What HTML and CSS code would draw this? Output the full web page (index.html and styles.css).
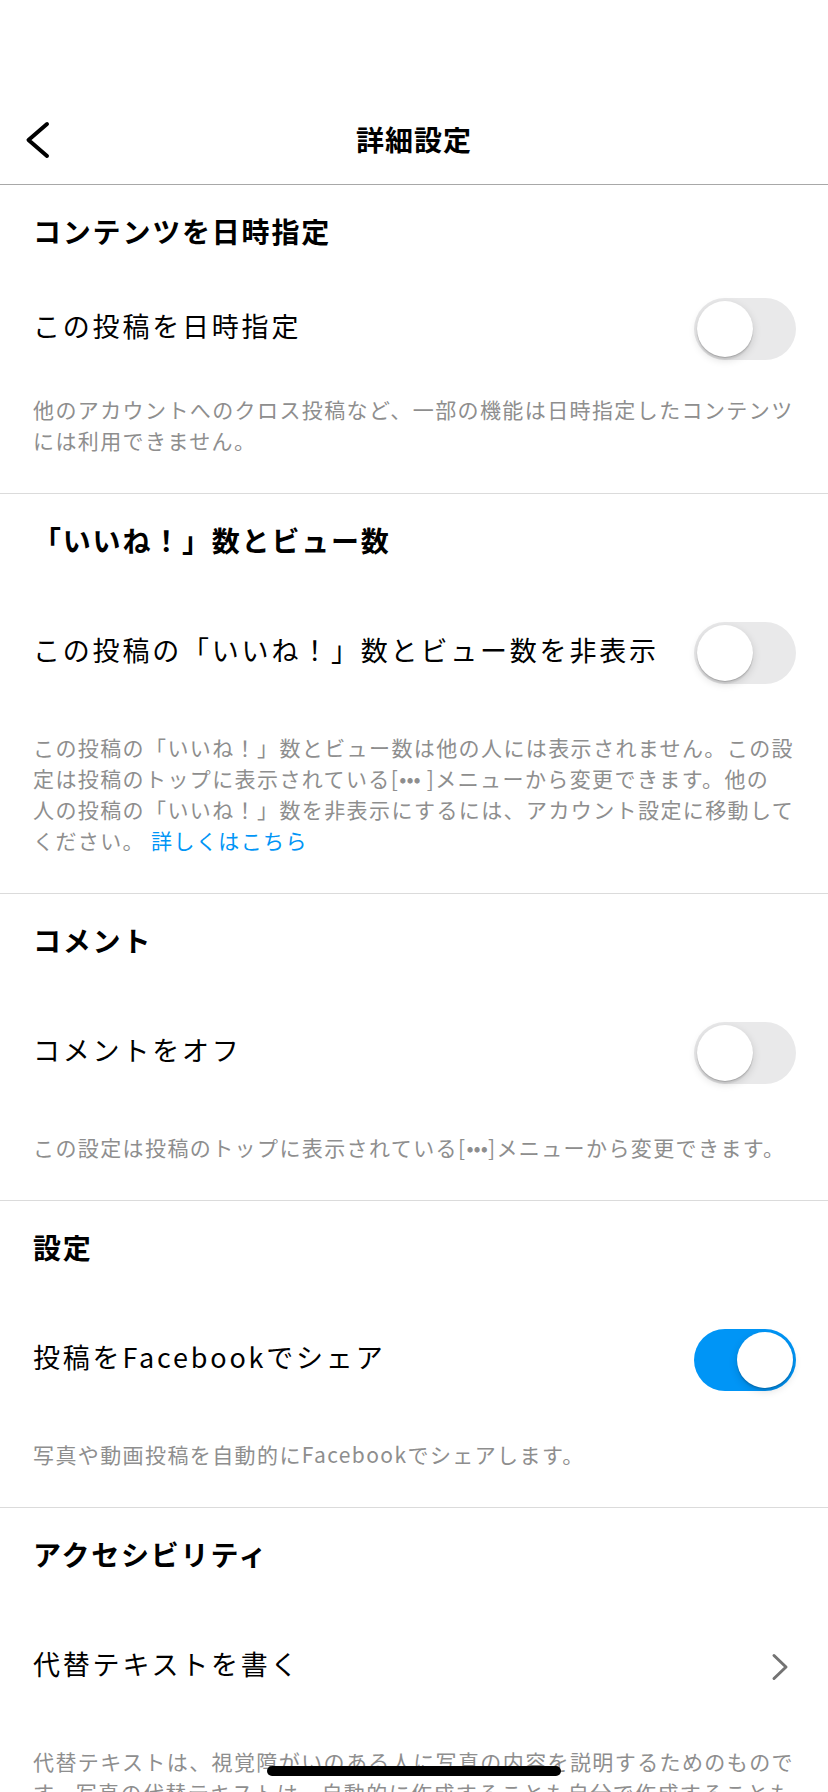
FILE: index.html
```html
<!DOCTYPE html>
<html lang="ja">
<head>
<meta charset="utf-8">
<title>詳細設定</title>
<link rel="stylesheet" href="styles.css">
</head>
<body>
<div class="screen">
  <header class="nav">
    <div class="nav-left">
      <svg class="back" width="26" height="40" viewBox="0 0 26 40"><path d="M22 4 L3.5 20 L22 36" fill="none" stroke="#000" stroke-width="4" stroke-linecap="round" stroke-linejoin="round"/></svg>
    </div>
    <h1 class="nav-title">詳細設定</h1>
    <div class="nav-right"></div>
  </header>

  <section class="section section-first">
    <h2 class="section-title">コンテンツを日時指定</h2>
    <div class="row">
      <span class="row-label">この投稿を日時指定</span>
      <span class="toggle"><span class="knob"></span></span>
    </div>
    <p class="desc">他のアカウントへのクロス投稿など、一部の機能は日時指定したコンテンツ<br>には利用できません。</p>
  </section>

  <section class="section">
    <h2 class="section-title">「いいね！」数とビュー数</h2>
    <div class="row">
      <span class="row-label">この投稿の「いいね！」数とビュー数を非表示</span>
      <span class="toggle"><span class="knob"></span></span>
    </div>
    <p class="desc">この投稿の「いいね！」数とビュー数は他の人には表示されません。この設<br>定は投稿のトップに表示されている[<span class="dots">•••</span> ]メニューから変更できます。他の<br>人の投稿の「いいね！」数を非表示にするには、アカウント設定に移動して<br>ください。 <a class="link">詳しくはこちら</a></p>
  </section>

  <section class="section">
    <h2 class="section-title">コメント</h2>
    <div class="row">
      <span class="row-label">コメントをオフ</span>
      <span class="toggle"><span class="knob"></span></span>
    </div>
    <p class="desc">この設定は投稿のトップに表示されている[<span class="dots">•••</span>]メニューから変更できます。</p>
  </section>

  <section class="section">
    <h2 class="section-title">設定</h2>
    <div class="row">
      <span class="row-label">投稿をFacebookでシェア</span>
      <span class="toggle on"><span class="knob"></span></span>
    </div>
    <p class="desc">写真や動画投稿を自動的にFacebookでシェアします。</p>
  </section>

  <section class="section">
    <h2 class="section-title">アクセシビリティ</h2>
    <div class="row">
      <span class="row-label">代替テキストを書く</span>
      <svg class="chev" width="20" height="30" viewBox="0 0 20 30"><path d="M4 3.5 L16 15 L4 26.5" fill="none" stroke="#737373" stroke-width="3" stroke-linecap="round" stroke-linejoin="round"/></svg>
    </div>
    <p class="desc">代替テキストは、視覚障がいのある人に写真の内容を説明するためのもので<br>す。写真の代替テキストは、自動的に作成することも自分で作成することも<br>できます。</p>
  </section>

  <div class="home-indicator"></div>
</div>
</body>
</html>
```

FILE: styles.css
```css
html, body {
  margin: 0;
  padding: 0;
  background: #fff;
  overflow: hidden;
}

body {
  font-family: "Noto Sans CJK JP", "Noto Sans", sans-serif;
  color: #000;
}

.screen {
  width: 828px;
  min-height: 1792px;
  padding-top: 96px;
  box-sizing: border-box;
}

.nav {
  height: 88px;
  display: grid;
  grid-template-columns: 1fr auto 1fr;
  align-items: center;
  border-bottom: 1px solid #a8a8a8;
}

.nav-left {
  display: flex;
  align-items: center;
  padding-left: 25px;
}

.back {
  display: block;
}

.nav-title {
  margin: 0;
  font-size: 28px;
  font-weight: 700;
  letter-spacing: 1px;
  line-height: 40px;
  padding-bottom: 2px;
}

.section {
  border-bottom: 1px solid #dbdbdb;
  padding: 0 32px 37px 33px;
}

.section-title {
  margin: 26px 0 0;
  font-size: 28px;
  font-weight: 700;
  letter-spacing: 1.8px;
  line-height: 40px;
}

.row {
  margin-top: 62px;
  height: 62px;
  display: flex;
  align-items: center;
  justify-content: space-between;
}

.section-first .row {
  margin-top: 47px;
}

.row-label {
  font-size: 27px;
  letter-spacing: 2.8px;
  line-height: 40px;
  padding-bottom: 6px;
}

.toggle {
  position: relative;
  width: 102px;
  height: 62px;
  border-radius: 31px;
  background: #e9e9ea;
  flex: none;
}

.toggle .knob {
  position: absolute;
  top: 3px;
  left: 3px;
  width: 56px;
  height: 56px;
  border-radius: 50%;
  background: #fff;
  box-shadow: 0 3px 8px rgba(0, 0, 0, 0.15), 0 1px 1px rgba(0, 0, 0, 0.16), 0 3px 1px rgba(0, 0, 0, 0.06);
}

.toggle.on {
  background: #0095f6;
}

.toggle.on .knob {
  left: 43px;
}

.chev {
  display: block;
  margin-right: 6px;
}

.desc {
  margin: 48px 0 0;
  font-size: 21px;
  letter-spacing: 1.4px;
  line-height: 31px;
  color: #8e8e8e;
  white-space: nowrap;
}

.section-first .desc {
  margin-top: 34px;
}

.dots {
  letter-spacing: 0;
  font-size: 21px;
}

.link {
  color: #0095f6;
  text-decoration: none;
}

.home-indicator {
  position: fixed;
  left: 267px;
  bottom: 16px;
  width: 294px;
  height: 10px;
  border-radius: 5px;
  background: #000;
}
```
